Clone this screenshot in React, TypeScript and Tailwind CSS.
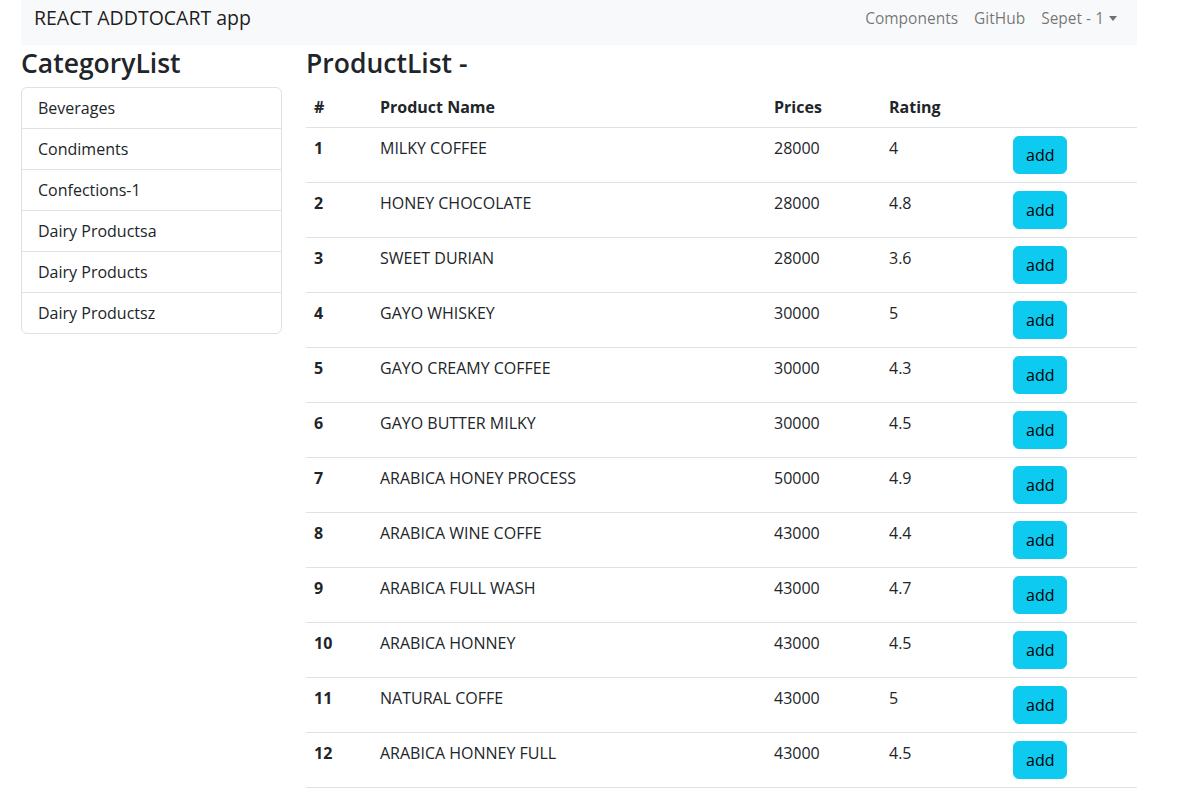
import React from "react";

const categories = [
  "Beverages",
  "Condiments",
  "Confections-1",
  "Dairy Productsa",
  "Dairy Products",
  "Dairy Productsz",
];

const products = [
  { id: 1, name: "MILKY COFFEE", price: 28000, rating: "4" },
  { id: 2, name: "HONEY CHOCOLATE", price: 28000, rating: "4.8" },
  { id: 3, name: "SWEET DURIAN", price: 28000, rating: "3.6" },
  { id: 4, name: "GAYO WHISKEY", price: 30000, rating: "5" },
  { id: 5, name: "GAYO CREAMY COFFEE", price: 30000, rating: "4.3" },
  { id: 6, name: "GAYO BUTTER MILKY", price: 30000, rating: "4.5" },
  { id: 7, name: "ARABICA HONEY PROCESS", price: 50000, rating: "4.9" },
  { id: 8, name: "ARABICA WINE COFFE", price: 43000, rating: "4.4" },
  { id: 9, name: "ARABICA FULL WASH", price: 43000, rating: "4.7" },
  { id: 10, name: "ARABICA HONNEY", price: 43000, rating: "4.5" },
  { id: 11, name: "NATURAL COFFE", price: 43000, rating: "5" },
  { id: 12, name: "ARABICA HONNEY FULL", price: 43000, rating: "4.5" },
];

export default function App() {
  return (
    <div className="min-h-screen bg-white text-[#212529] font-['Segoe_UI','Open_Sans',sans-serif] text-[16px]">
      <div className="w-[1116px] ml-[21px]">
        {/* Navbar */}
        <nav className="flex justify-between items-start h-[45px] bg-[#f8f9fa] pl-[13px] pr-[20px]">
          <span className="text-[19.5px] leading-[30px] pt-[3px] text-black/90">REACT ADDTOCART app</span>
          <div className="flex items-start gap-[16px] pt-[6px] leading-[24px] text-[15.5px] text-black/55">
            <span>Components</span>
            <span>GitHub</span>
            <span className="flex items-center">
              Sepet - 1
              <span className="ml-[5px] mt-[1px] w-0 h-0 border-l-[4px] border-r-[4px] border-t-[5px] border-l-transparent border-r-transparent border-t-black/55" />
            </span>
          </div>
        </nav>

        <div className="flex gap-[24px]">
          {/* Categories */}
          <div className="w-[261px]">
            <h3 className="text-[26.5px] font-semibold leading-[32px] mt-[2px] mb-[8px]">CategoryList</h3>
            <ul className="border border-[#dee2e6] rounded-[6px]">
              {categories.map((c, i) => (
                <li
                  key={c}
                  className={`px-[16px] py-[8px] leading-[24px] ${i > 0 ? "border-t border-[#dee2e6]" : ""}`}
                >
                  {c}
                </li>
              ))}
            </ul>
          </div>

          {/* Products */}
          <div className="w-[831px]">
            <h3 className="text-[26.5px] font-semibold leading-[32px] mt-[2px] mb-[8px]">ProductList -</h3>
            <table className="w-full border-collapse text-left leading-[24px]">
              <thead>
                <tr className="border-b border-[#dee2e6]">
                  <th className="w-[66px] p-[8px] font-bold">#</th>
                  <th className="w-[394px] p-[8px] font-bold">Product Name</th>
                  <th className="w-[115px] p-[8px] font-bold">Prices</th>
                  <th className="w-[124px] p-[8px] font-bold">Rating</th>
                  <th className="p-[8px]"></th>
                </tr>
              </thead>
              <tbody>
                {products.map((p) => (
                  <tr key={p.id} className="border-b border-[#dee2e6] align-top">
                    <th className="p-[8px] font-bold">{p.id}</th>
                    <td className="p-[8px]">{p.name}</td>
                    <td className="p-[8px]">{p.price}</td>
                    <td className="p-[8px]">{p.rating}</td>
                    <td className="p-[8px]">
                      <button className="bg-[#0dcaf0] border border-[#0dcaf0] rounded-[6px] px-[12px] py-[6px] leading-[24px] text-black">
                        add
                      </button>
                    </td>
                  </tr>
                ))}
              </tbody>
            </table>
          </div>
        </div>
      </div>
    </div>
  );
}
